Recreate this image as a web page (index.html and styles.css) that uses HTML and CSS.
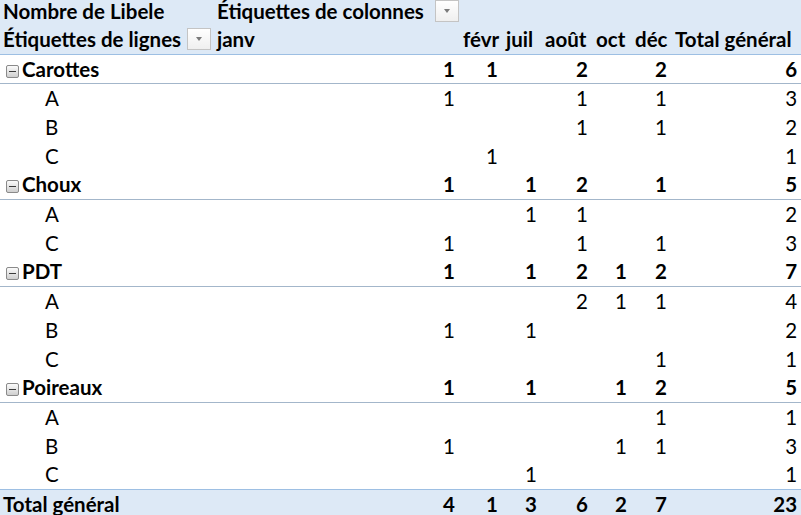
FILE: index.html
```html
<!DOCTYPE html>
<html lang="fr">
<head>
<meta charset="utf-8">
<title>Tableau croisé</title>
<link rel="stylesheet" href="styles.css">
</head>
<body>
<table class="pivot">
  <colgroup>
    <col class="c-a"><col class="c-b"><col class="c-c"><col class="c-d"><col class="c-e"><col class="c-f"><col class="c-g"><col class="c-h">
  </colgroup>
  <thead>
    <tr class="hdr hdr1">
      <th class="lbl">Nombre de Libele</th>
      <th class="lbl" colspan="7"><div class="withbtn colhdr"><span>Étiquettes de colonnes</span><span class="dd"></span></div></th>
    </tr>
    <tr class="hdr hdr2">
      <th class="lbl"><div class="withbtn"><span>Étiquettes de lignes</span><span class="dd"></span></div></th>
      <th class="lbl">janv</th>
      <th class="lbl">févr</th>
      <th class="lbl">juil</th>
      <th class="lbl">août</th>
      <th class="lbl">oct</th>
      <th class="lbl">déc</th>
      <th class="lbl">Total général</th>
    </tr>
  </thead>
  <tbody>
    <tr class="grp"><td class="lbl"><span class="tog"></span>Carottes</td><td>1</td><td>1</td><td></td><td>2</td><td></td><td>2</td><td>6</td></tr>
    <tr class="item"><td class="lbl">A</td><td>1</td><td></td><td></td><td>1</td><td></td><td>1</td><td>3</td></tr>
    <tr class="item"><td class="lbl">B</td><td></td><td></td><td></td><td>1</td><td></td><td>1</td><td>2</td></tr>
    <tr class="item"><td class="lbl">C</td><td></td><td>1</td><td></td><td></td><td></td><td></td><td>1</td></tr>
    <tr class="grp"><td class="lbl"><span class="tog"></span>Choux</td><td>1</td><td></td><td>1</td><td>2</td><td></td><td>1</td><td>5</td></tr>
    <tr class="item"><td class="lbl">A</td><td></td><td></td><td>1</td><td>1</td><td></td><td></td><td>2</td></tr>
    <tr class="item"><td class="lbl">C</td><td>1</td><td></td><td></td><td>1</td><td></td><td>1</td><td>3</td></tr>
    <tr class="grp"><td class="lbl"><span class="tog"></span>PDT</td><td>1</td><td></td><td>1</td><td>2</td><td>1</td><td>2</td><td>7</td></tr>
    <tr class="item"><td class="lbl">A</td><td></td><td></td><td></td><td>2</td><td>1</td><td>1</td><td>4</td></tr>
    <tr class="item"><td class="lbl">B</td><td>1</td><td></td><td>1</td><td></td><td></td><td></td><td>2</td></tr>
    <tr class="item"><td class="lbl">C</td><td></td><td></td><td></td><td></td><td></td><td>1</td><td>1</td></tr>
    <tr class="grp"><td class="lbl"><span class="tog"></span>Poireaux</td><td>1</td><td></td><td>1</td><td></td><td>1</td><td>2</td><td>5</td></tr>
    <tr class="item"><td class="lbl">A</td><td></td><td></td><td></td><td></td><td></td><td>1</td><td>1</td></tr>
    <tr class="item"><td class="lbl">B</td><td>1</td><td></td><td></td><td></td><td>1</td><td>1</td><td>3</td></tr>
    <tr class="item"><td class="lbl">C</td><td></td><td></td><td>1</td><td></td><td></td><td></td><td>1</td></tr>
  </tbody>
  <tfoot>
    <tr class="total"><td class="lbl">Total général</td><td>4</td><td>1</td><td>3</td><td>6</td><td>2</td><td>7</td><td>23</td></tr>
  </tfoot>
</table>
</body>
</html>
```

FILE: styles.css
```css
html, body {
  margin: 0;
  padding: 0;
  background: #ffffff;
  overflow: hidden;
}

.pivot {
  border-collapse: collapse;
  table-layout: fixed;
  width: 801px;
  font-family: Lato, "Open Sans", sans-serif;
  font-size: 20.5px;
  color: #000000;
}

.c-a { width: 213px; }
.c-b { width: 246px; }
.c-c { width: 43px; }
.c-d { width: 39px; }
.c-e { width: 51px; }
.c-f { width: 39px; }
.c-g { width: 40px; }
.c-h { width: 130px; }

.pivot th,
.pivot td {
  padding: 0 4px 0 4px;
  height: 29px;
  box-sizing: border-box;
  white-space: nowrap;
  text-align: right;
  vertical-align: middle;
  font-weight: normal;
  line-height: 22px;
}

.pivot .lbl {
  text-align: left;
}

.hdr {
  background: #dde9f6;
  font-weight: bold;
}

.hdr th {
  font-weight: bold;
}

.hdr1 th {
  height: 25px;
  padding-top: 0;
  vertical-align: top;
}

.hdr2 th {
  border-bottom: 1px solid #9dbfe3;
}

.hdr th:first-child {
  padding-left: 3px;
}

.withbtn {
  display: flex;
  align-items: center;
  justify-content: space-between;
}

.colhdr {
  width: 240px;
}

.dd {
  width: 24px;
  height: 22px;
  box-sizing: border-box;
  border: 1px solid #c4c4c4;
  background: linear-gradient(#ffffff, #efefef);
  position: relative;
  margin-right: -2px;
  flex: none;
}

.dd::after {
  content: "";
  position: absolute;
  left: 8px;
  top: 8px;
  border-left: 3.5px solid transparent;
  border-right: 3.5px solid transparent;
  border-top: 4px solid #7a7a7a;
}

.grp td {
  font-weight: bold;
  border-bottom: 1px solid #a3b6ca;
}

.grp td.lbl {
  padding-left: 6px;
}

.tog {
  display: inline-block;
  width: 13px;
  height: 13px;
  box-sizing: border-box;
  border: 1px solid #8a8a8a;
  border-radius: 2px;
  background: linear-gradient(#fbfbfb, #cfcfcf);
  position: relative;
  margin-right: 3px;
  vertical-align: -1px;
}

.tog::after {
  content: "";
  position: absolute;
  left: 2px;
  right: 2px;
  top: 5px;
  height: 1px;
  background: #3a3a3a;
}

.item td.lbl {
  padding-left: 45px;
}

.total td {
  background: #dde9f6;
  font-weight: bold;
  border-top: 1px solid #9dbfe3;
}

.total td.lbl {
  padding-left: 3px;
}
```
